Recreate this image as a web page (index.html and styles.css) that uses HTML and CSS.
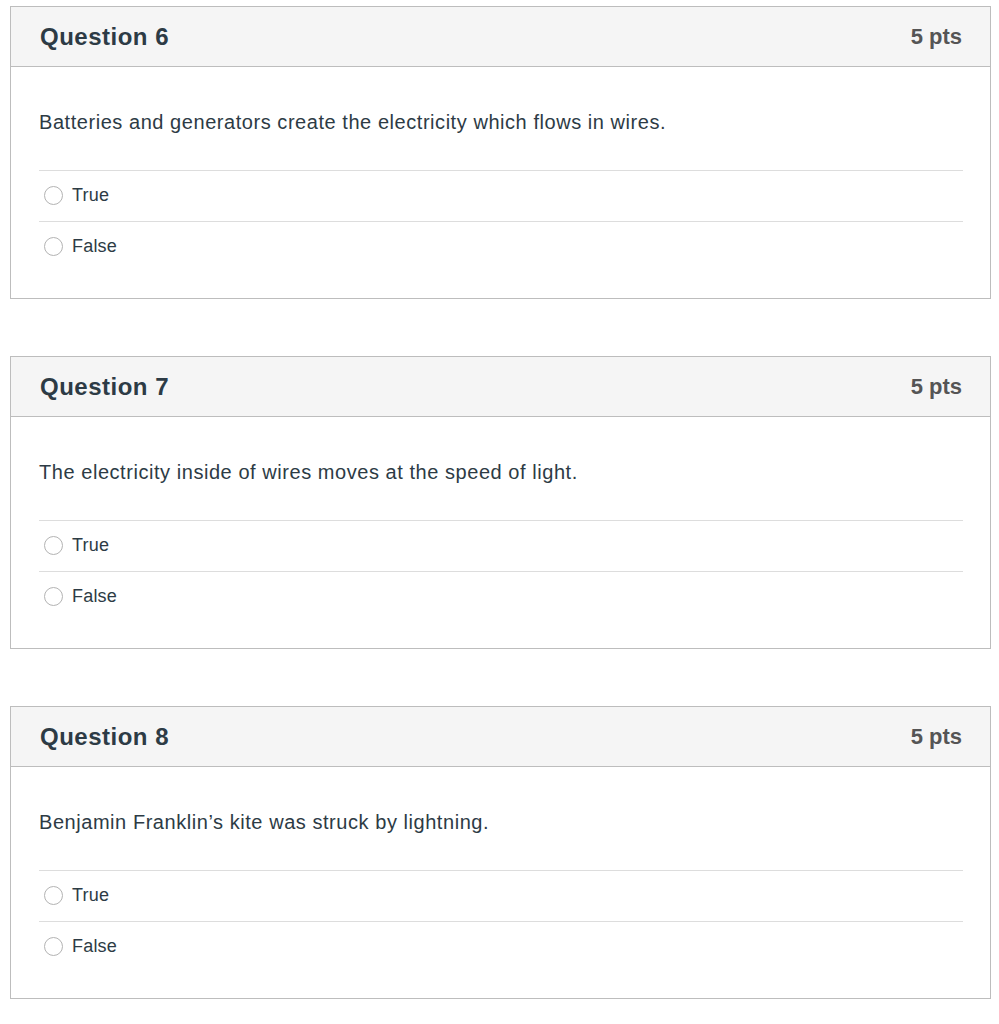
FILE: index.html
```html
<!DOCTYPE html>
<html lang="en">
<head>
    <meta charset="UTF-8">
    <meta name="viewport" content="width=device-width, initial-scale=1.0">
    <title>Quiz</title>
    <link rel="stylesheet" href="styles.css">
</head>
<body>
    <div class="quiz">
        <div class="question">
            <div class="header">
                <span class="name">Question 6</span>
                <span class="points">5 pts</span>
            </div>
            <div class="content">
                <div class="text">Batteries and generators create the electricity which flows in wires.</div>
                <div class="answers">
                    <label class="answer"><span class="radio"></span>True</label>
                    <label class="answer"><span class="radio"></span>False</label>
                </div>
            </div>
        </div>

        <div class="question">
            <div class="header">
                <span class="name">Question 7</span>
                <span class="points">5 pts</span>
            </div>
            <div class="content">
                <div class="text">The electricity inside of wires moves at the speed of light.</div>
                <div class="answers">
                    <label class="answer"><span class="radio"></span>True</label>
                    <label class="answer"><span class="radio"></span>False</label>
                </div>
            </div>
        </div>

        <div class="question">
            <div class="header">
                <span class="name">Question 8</span>
                <span class="points">5 pts</span>
            </div>
            <div class="content">
                <div class="text">Benjamin Franklin’s kite was struck by lightning.</div>
                <div class="answers">
                    <label class="answer"><span class="radio"></span>True</label>
                    <label class="answer"><span class="radio"></span>False</label>
                </div>
            </div>
        </div>
    </div>
</body>
</html>
```

FILE: styles.css
```css
body {
    margin: 0;
    padding: 6px 8px 0 10px;
    font-family: "Liberation Sans", Helvetica, Arial, sans-serif;
    color: #2d3b45;
    background: #ffffff;
}

.question {
    border: 1px solid #bdbdbd;
    margin-bottom: 57px;
}

.header {
    display: flex;
    justify-content: space-between;
    align-items: center;
    height: 59px;
    padding: 0 28px 0 29px;
    background-color: #f5f5f5;
    border-bottom: 1px solid #bdbdbd;
}

.name {
    font-size: 24px;
    font-weight: bold;
    letter-spacing: 0.5px;
}

.points {
    font-size: 22px;
    font-weight: bold;
    color: #555555;
}

.content {
    padding: 42px 27px 26px 28px;
}

.text {
    font-size: 20px;
    letter-spacing: 0.55px;
    line-height: 27px;
    margin-bottom: 34px;
}

.answer {
    display: flex;
    align-items: center;
    height: 48px;
    padding-bottom: 2px;
    border-top: 1px solid #dddddd;
    font-size: 18px;
    letter-spacing: 0.2px;
}

.radio {
    width: 17px;
    height: 17px;
    border: 1px solid #b3b3b3;
    border-radius: 50%;
    margin: 0 9px 0 5px;
    background: #ffffff;
}
```
